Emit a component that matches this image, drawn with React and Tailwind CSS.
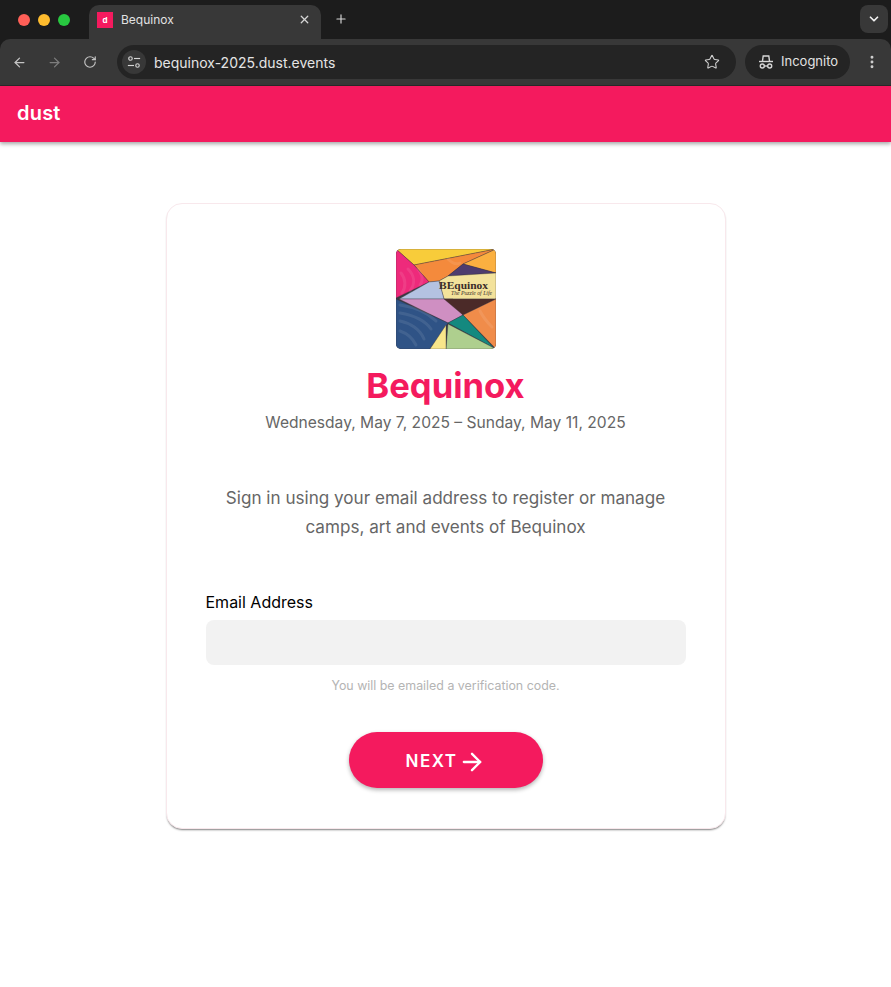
import { ArrowLeft, ArrowRight, ChevronDown, EllipsisVertical, Plus, RotateCw, Star, X } from "lucide-react";

const chromeFont = "font-['Inter','Liberation_Sans',sans-serif]";
const pageFont = "font-['Inter','Noto_Sans',sans-serif]";

function PosterLogo() {
  return (
    <svg viewBox="0 0 100 100" className="block w-[100px] h-[100px] rounded-[5px]">
      <rect width="100" height="100" fill="#3a3a42" />
      <g stroke="#3b3340" strokeWidth="0.35">
        <polygon points="0,0 100,0 18,16" fill="#f8cc3a" />
        <polygon points="18,16 100,0 67,15 52,27 43,32 33,33" fill="#f48a3c" />
        <polygon points="100,0 100,24 67,15" fill="#fbb040" />
        <polygon points="67,15 100,24 52,27" fill="#4d3c6e" />
        <polygon points="0,0 18,16 33,33 0,49" fill="#ee2a7b" />
        <polygon points="43,32 52,27 100,24 100,50 48,50" fill="#f3e29b" />
        <polygon points="33,33 43,32 48,50 3,50" fill="#b4c2e2" />
        <polygon points="3,50 57,50 67,66 52,74" fill="#cf8fc2" />
        <polygon points="48,50 100,50 67,66" fill="#4b2a28" />
        <polygon points="100,50 100,100 67,66" fill="#f08c4a" />
        <polygon points="52,74 67,66 98,99" fill="#14897f" />
        <polygon points="52,75 98,99 100,100 50,100" fill="#aecf8e" />
        <polygon points="0,50 52,74 34,100 0,100" fill="#2f5386" />
        <polygon points="50,76 50,100 34,100" fill="#f8e68a" />
      </g>
      {/* feather marks */}
      <g fill="none" stroke="#ffffff" strokeOpacity="0.09" strokeWidth="3" strokeLinecap="round">
        <path d="M4 56 C18 58 30 62 40 72" />
        <path d="M4 64 C16 66 28 70 35 80" />
        <path d="M4 72 C14 74 24 80 28 90" />
        <path d="M4 82 C10 84 16 88 20 96" />
        <path d="M12 20 C18 26 20 34 14 42" />
        <path d="M5 24 C10 30 10 38 6 44" />
        <path d="M22 20 C26 26 28 30 24 36" />
        <path d="M52 10 C56 14 60 16 64 14" />
        <path d="M84 62 C88 70 92 74 96 78" />
      </g>
      <text x="43" y="39.5" fontFamily="'Liberation Serif', serif" fontWeight="700" fontSize="10" textLength="49" lengthAdjust="spacingAndGlyphs" fill="#3a2c2a">BEquinox</text>
      <text x="55" y="46" fontFamily="'Liberation Serif', serif" fontStyle="italic" fontSize="5.5" textLength="41" lengthAdjust="spacingAndGlyphs" fill="#3a2c2a">The Puzzle of Life</text>
    </svg>
  );
}

function IncognitoIcon() {
  return (
    <svg viewBox="0 0 16 16" className="w-4 h-4" fill="none" stroke="#d6d6d6" strokeWidth="1.4">
      <path d="M4.5 7 L5.2 2 H10.8 L11.5 7" />
      <path d="M1 7.5 H15" />
      <circle cx="4.3" cy="12" r="2" />
      <circle cx="11.7" cy="12" r="2" />
      <path d="M6.3 12 H9.7" />
    </svg>
  );
}

function SiteSettingsIcon() {
  return (
    <svg viewBox="0 0 16 16" className="w-[14px] h-[14px]" fill="none" stroke="#d6d6d6" strokeWidth="1.3">
      <circle cx="4" cy="4" r="2" />
      <path d="M8 4 H15" />
      <circle cx="12" cy="12" r="2" />
      <path d="M1 12 H8" />
    </svg>
  );
}

function BrowserChrome() {
  return (
    <div className={`bg-[#1c1c1c] ${chromeFont}`}>
      <div className="flex items-end h-[39px]">
        <div className="flex items-center gap-2 w-[89px] h-[38px] pl-[18px] pb-[1px]">
          <span className="w-3 h-3 rounded-full bg-[#ff5f57]" />
          <span className="w-3 h-3 rounded-full bg-[#febc2e]" />
          <span className="w-3 h-3 rounded-full bg-[#28c840]" />
        </div>
        <div className="flex items-center w-[232px] h-[34px] rounded-t-[10px] bg-[#383838] pl-2 pr-[10px] pb-[5px]">
          <span className="flex items-center justify-center w-4 h-4 bg-[#f41a5e] text-white text-[8px] font-bold">d</span>
          <span className="ml-2 text-[12px] text-[#e2e2e2]">Bequinox</span>
          <X className="ml-auto text-[#d6d6d6]" size={13} strokeWidth={2.4} />
        </div>
        <Plus className="ml-[13px] mb-[13px] text-[#d6d6d6]" size={14} strokeWidth={2} />
        <div className="ml-auto mr-[3px] mb-[6px] flex items-center justify-center w-[28px] h-[28px] rounded-[8px] bg-[#383838]">
          <ChevronDown className="text-[#f0f0f0]" size={14} strokeWidth={3} />
        </div>
      </div>
      <div className="flex items-center h-[47px] rounded-t-[10px] bg-[#383838] border-b border-[#2a2a2a] pl-[12px] pr-[11px]">
        <ArrowLeft className="text-[#c4c4c4]" size={15} strokeWidth={2} />
        <ArrowRight className="ml-[20px] text-[#7d7d7d]" size={15} strokeWidth={2} />
        <RotateCw className="ml-[21px] text-[#c4c4c4]" size={14} strokeWidth={2} />
        <div className="flex items-center ml-[20px] w-[619px] h-[34px] rounded-full bg-[#242424] pl-[5px] pr-[16px]">
          <span className="flex items-center justify-center w-6 h-6 rounded-full bg-[#383838]">
            <SiteSettingsIcon />
          </span>
          <span className="ml-[8px] text-[14px] text-[#e4e4e4]">bequinox-2025.dust.events</span>
          <Star className="ml-auto text-[#d0d0d0]" size={16} strokeWidth={1.6} />
        </div>
        <div className="flex items-center ml-[9px] w-[105px] h-[34px] rounded-full bg-[#242424] pl-[13px]">
          <IncognitoIcon />
          <span className="ml-[7px] text-[13px] text-[#e2e2e2]">Incognito</span>
        </div>
        <EllipsisVertical className="ml-auto text-[#d0d0d0]" size={16} strokeWidth={2.4} />
      </div>
    </div>
  );
}

export default function App() {
  return (
    <div className={`min-h-[987px] bg-white ${pageFont}`}>
      <BrowserChrome />

      <header className="relative flex items-center h-[56px] px-[17px] pb-[2px] bg-[#f41a5e] shadow-[0_2px_4px_rgba(0,0,0,0.35)]">
        <span className="text-[20px] font-semibold text-white tracking-[0.2px]">dust</span>
      </header>

      <main className="flex justify-center pt-[61px]">
        <div className="w-[560px] h-[626px] rounded-[16px] bg-white px-[39px] pt-[45px] border border-[#f8e8ec] shadow-[0_2px_2px_-1px_rgba(0,0,0,0.5)] flex flex-col items-center">
          <PosterLogo />
          <h1 className="mt-[13px] text-[34.6px] leading-[46px] font-bold text-[#f41a5e]">Bequinox</h1>
          <p className="mt-[3px] text-[15.6px] leading-[24px] text-[#666666]">Wednesday, May 7, 2025 – Sunday, May 11, 2025</p>
          <p className="mt-[48px] w-[450px] text-center text-[17.1px] leading-[29px] text-[#666666]">
            Sign in using your email address to register or manage camps, art and events of Bequinox
          </p>

          <label className="mt-[49px] self-start text-[16px] leading-[24px] text-black">Email Address</label>
          <input type="text" className="mt-[6px] w-full h-[45px] rounded-[8px] bg-[#f2f2f2] outline-none" />
          <p className="mt-[13px] text-[12.4px] leading-[16px] text-[#b4b4b4]">You will be emailed a verification code.</p>

          <button className="mt-[38px] flex items-center justify-center pt-[3px] w-[194px] h-[56px] rounded-full bg-[#f41a5e] text-white text-[17px] font-semibold tracking-[1.5px] shadow-[0_2px_4px_rgba(0,0,0,0.3)]">
            NEXT
            <ArrowRight size={28} strokeWidth={2} />
          </button>
        </div>
      </main>
    </div>
  );
}
